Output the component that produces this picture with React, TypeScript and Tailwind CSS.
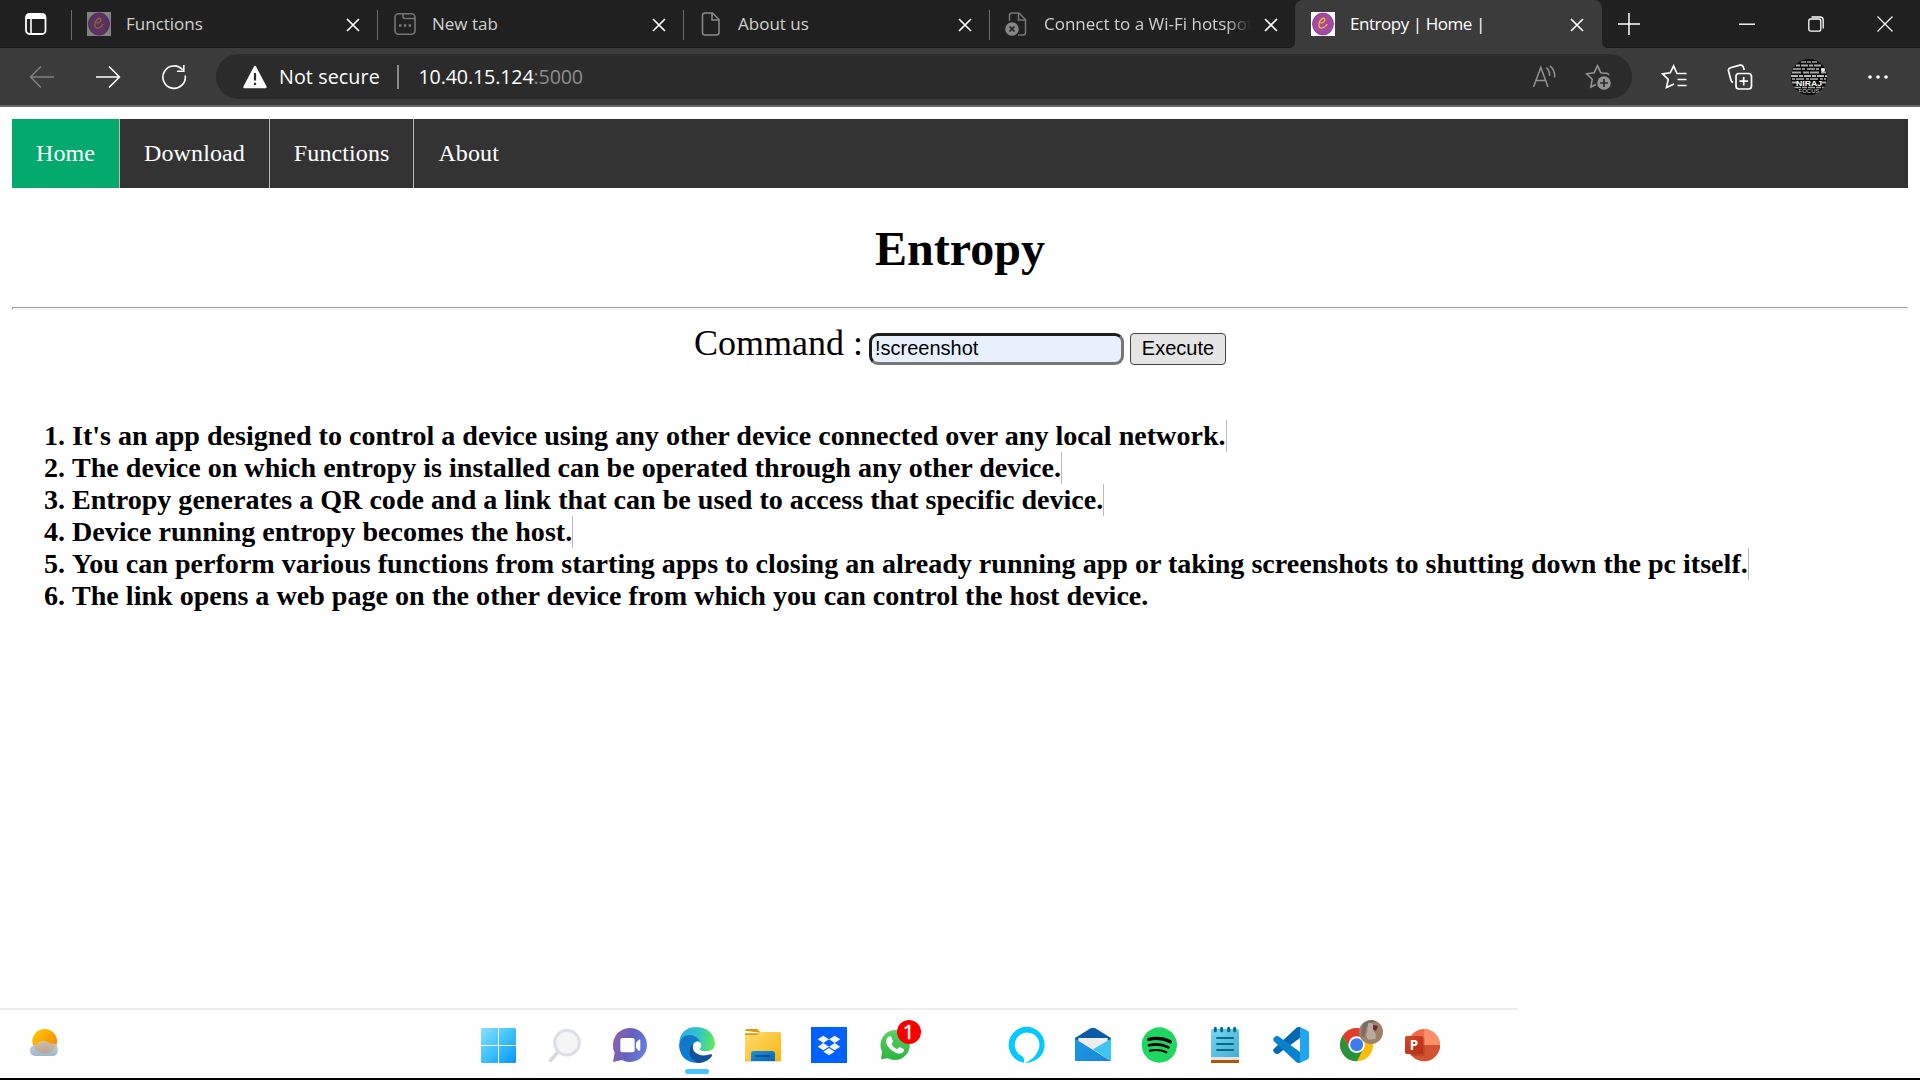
import type { ReactNode } from "react";

const UI = "font-['Open_Sans','Noto_Sans',sans-serif]";
const SERIF = "font-['Liberation_Serif',serif]";

function Cross({ className = "" }: { className?: string }) {
  return (
    <svg className={className} width="14" height="14" viewBox="0 0 14 14" fill="none" stroke="#fff" strokeWidth="1.7">
      <path d="M1 1L13 13M13 1L1 13" />
    </svg>
  );
}

function Favicon({ dim = false }: { dim?: boolean }) {
  return (
    <svg width="24" height="24" viewBox="0 0 24 24" fill="none">
      <rect width="24" height="24" fill={dim ? "#828282" : "#fff"} />
      <ellipse cx="12" cy="12" rx="10.5" ry="11" fill={dim ? "#5b3160" : "#a349a4"} stroke={dim ? "#45244a" : "#7c3b80"} strokeWidth="0.8" />
      <path d="M9.500 11C12.500 11.200 14.800 8.500 13.600 6.800C12 5.200 8.500 8 7.900 12C7.300 17.300 12.500 17.500 16.300 12" stroke={dim ? "#8a6a35" : "#f2c21b"} strokeWidth="1.3" />
    </svg>
  );
}

function NewTabIcon() {
  return (
    <svg width="24" height="24" viewBox="0 0 24 24" fill="none" stroke="#757575" strokeWidth="1.6">
      <rect x="2" y="1.800" width="20" height="20.400" rx="3.500" />
      <path d="M10 2V4.500Q10 6.500 12 6.500H22" />
      <path d="M6 13.500H8.500M10.800 13.500H13.300M15.600 13.500H18" strokeWidth="2.400" />
    </svg>
  );
}

function PageIcon() {
  return (
    <svg width="24" height="24" viewBox="0 0 24 24" fill="none" stroke="#8a8a8a" strokeWidth="1.500">
      <path d="M6 1H13.500L20 7.500V20.500Q20 23 17.500 23H6Q3.500 23 3.500 20.500V3.500Q3.500 1 6 1ZM13 1V8H20" />
    </svg>
  );
}

function BrokenPageIcon() {
  return (
    <svg width="24" height="24" viewBox="0 0 24 24" fill="none" stroke="#757575" strokeWidth="1.500">
      <path d="M4.500 9V3.500Q4.500 1 7 1H14L20.500 7.500V20.500Q20.500 23 18 23H13M13.500 1V8H20.500" />
      <circle cx="7" cy="17" r="6.800" fill="#858585" stroke="none" />
      <path d="M4.500 14.500L9.500 19.500M9.500 14.500L4.500 19.500" stroke="#202020" strokeWidth="1.700" />
    </svg>
  );
}

function Tab({ icon, title, active = false, titleClass = "" }: { icon: ReactNode; title: string; active?: boolean; titleClass?: string }) {
  return (
    <div
      className={
        "relative flex h-12 shrink-0 items-center pl-4 " +
        (active ? "w-[307px] rounded-t-[8px] bg-[#3b3b3b] text-white" : "w-[306px] text-[#d0d0d0]")
      }
    >
      {active ? (
        <>
          <span className="absolute -left-[5px] bottom-0 size-[5px] bg-[radial-gradient(circle_at_0_0,transparent_4.5px,#3b3b3b_5px)]" />
          <span className="absolute -right-[5px] bottom-0 size-[5px] bg-[radial-gradient(circle_at_100%_0,transparent_4.5px,#3b3b3b_5px)]" />
        </>
      ) : (
        <span className="absolute left-0 top-[10px] h-[30px] w-px bg-[#6a6a6a]" />
      )}
      {icon}
      <span className={"ml-[15px] w-[207px] overflow-hidden whitespace-nowrap text-[17px] leading-6 " + titleClass}>{title}</span>
      <Cross className="ml-[13px] mt-[2px]" />
    </div>
  );
}

function TabStrip() {
  return (
    <div className="flex h-12 items-center bg-[#202020] shadow-[inset_0_-1px_0_#181818]">
      <svg className="ml-6 mr-6" width="23" height="24" viewBox="0 0 23 24" fill="none">
        <rect x="2" y="2" width="19.500" height="20" rx="3.500" stroke="#fff" strokeWidth="1.800" />
        <path d="M1.500 7V5Q1.500 1.500 5 1.500H18.500Q22 1.500 22 5V7Z" fill="#fff" />
        <path d="M7 7V22" stroke="#fff" strokeWidth="1.600" />
      </svg>
      <Tab icon={<Favicon dim />} title="Functions" />
      <Tab icon={<NewTabIcon />} title="New tab" />
      <Tab icon={<PageIcon />} title="About us" />
      <Tab
        icon={<BrokenPageIcon />}
        title="Connect to a Wi-Fi hotspot"
        titleClass="[mask-image:linear-gradient(to_right,black_88%,transparent)]"
      />
      <Tab icon={<Favicon />} title="Entropy | Home |" active titleClass="tracking-[-0.45px]" />
      <svg className="ml-[16px]" width="22" height="22" viewBox="0 0 22 22" stroke="#fff" strokeWidth="1.500">
        <path d="M11 0V22M0 11H22" />
      </svg>
      <div className="ml-auto mr-[27px] flex items-center gap-[53px]">
        <svg width="16" height="16" viewBox="0 0 16 16" stroke="#fff" strokeWidth="1.400">
          <path d="M0 8.200H16" />
        </svg>
        <svg width="16" height="16" viewBox="0 0 16 16" fill="none" stroke="#fff" strokeWidth="1.300">
          <rect x="0.800" y="3" width="12" height="12.200" rx="2" />
          <path d="M3.500 1H12Q15.200 1 15.200 4V12.500" />
        </svg>
        <svg width="16" height="16" viewBox="0 0 16 16" stroke="#fff" strokeWidth="1.300">
          <path d="M0.500 0.500L15.500 15.500M15.500 0.500L0.500 15.500" />
        </svg>
      </div>
    </div>
  );
}

function ProfilePicture() {
  return (
    <svg width="36" height="36" viewBox="0 0 36 36" fill="none">
      <defs>
        <clipPath id="profile">
          <circle cx="18" cy="18" r="18" />
        </clipPath>
      </defs>
      <g clipPath="url(#profile)">
        <rect width="36" height="36" fill="#0b0b0b" />
        <g stroke="#a8a8a8" strokeWidth="1.800">
          <path d="M10 3H27" strokeDasharray="5 1 4 1" stroke="#777" />
          <path d="M5 6.500H31" strokeDasharray="4 1 7 1" />
          <path d="M2 10H34" strokeDasharray="8 1 3 2" stroke="#888" />
          <path d="M1 13.500H35" strokeDasharray="9 2 6 1" />
          <path d="M0 17H36" strokeDasharray="7 1 4 1" stroke="#bbb" />
          <path d="M1 20H35" strokeDasharray="3 1 8 2" stroke="#888" />
          <path d="M1 23.500H6M31 23.500H35" />
          <path d="M3 28.500H33" strokeDasharray="7 1 5 1" strokeWidth="1.300" />
        </g>
        <circle cx="32" cy="11" r="2" fill="#eee" />
        <text x="18" y="27" textAnchor="middle" fontSize="8" fontWeight="700" fill="#fff" textLength="26" lengthAdjust="spacingAndGlyphs" fontFamily="Liberation Sans">NIRAJ</text>
        <text x="18" y="33.500" textAnchor="middle" fontSize="6" fill="#ccc" fontFamily="Liberation Sans">FOCUS</text>
      </g>
    </svg>
  );
}

function Toolbar() {
  return (
    <div className="flex h-[59px] items-center border-b-2 border-[#686868] bg-[#3b3b3b] pl-[29px]">
      <svg width="26" height="24" viewBox="0 0 26 24" fill="none" stroke="#828282" strokeWidth="1.500">
        <path d="M25 12H1.500M12 1.500L1.500 12L12 22.500" />
      </svg>
      <svg className="ml-10" width="26" height="24" viewBox="0 0 26 24" fill="none" stroke="#fff" strokeWidth="1.500">
        <path d="M1 12H24.500M14 1.500L24.500 12L14 22.500" />
      </svg>
      <svg className="ml-10" width="26" height="26" viewBox="0 0 26 26" fill="none" stroke="#fff" strokeWidth="1.600">
        <path d="M24.200 11.500A11.200 11.200 0 1 1 21.500 5.700M22.800 1V7.200H16" />
      </svg>
      <div className="ml-[29px] flex h-[45px] w-[1416px] items-center rounded-full bg-[#2b2b2b] pl-[27px] text-[19.7px] text-white">
        <svg width="24" height="24" viewBox="0 0 24 24">
          <path d="M12 2L22.500 22H1.500Z" fill="#fff" stroke="#fff" strokeWidth="2.400" strokeLinejoin="round" />
          <path d="M12 8V15.500M12 17.800V20" stroke="#2b2b2b" strokeWidth="2.200" />
        </svg>
        <span className="ml-3 w-[118px] whitespace-nowrap tracking-[0.1px]">Not secure</span>
        <span className="mr-5 h-6 w-[1.5px] bg-[#8a8a8a]" />
        <span className="whitespace-nowrap tracking-[-0.15px]">
          10.40.15.124<span className="text-[#8c8c8c]">:5000</span>
        </span>
        <svg className="ml-auto" width="24" height="24" viewBox="0 0 24 24" fill="none" stroke="#929292" strokeWidth="1.500">
          <path d="M1.500 22L8.800 2.500L16 22M4 15.500H13.600M14.500 2.500Q18 6 17.600 11M18 .800Q23.500 6 22.500 12.500" />
        </svg>
        <svg className="ml-[29px] mr-[21px]" width="26" height="26" viewBox="0 0 26 26" fill="none" stroke="#929292" strokeWidth="1.600">
          <path d="M24 11L22.600 9.500L15.800 8.700L12.500 1.800L9.200 8.700L1.600 9.800L7.200 15.300L5.800 23L11 20.500" />
          <circle cx="19" cy="19" r="6.800" fill="#929292" stroke="none" />
          <path d="M19 15V23M15 19H23" stroke="#2b2b2b" strokeWidth="1.700" />
        </svg>
      </div>
      <svg className="ml-[29px]" width="26" height="26" viewBox="0 0 26 26" fill="none" stroke="#fff" strokeWidth="1.700">
        <path d="M25.500 9.500H16L12.600 2L9.200 8.800L1.600 9.800L7.200 15.300L5.500 23.500L13 20M16.500 15.500H25.500M16.500 21.500H25.500" />
      </svg>
      <svg className="ml-[40px]" width="26" height="26" viewBox="0 0 26 26" fill="none" stroke="#fff" strokeWidth="1.700">
        <rect x="9" y="9.500" width="15.500" height="15.500" rx="3" />
        <path d="M16.700 13V21.500M12.500 17.200H21M6 18.500Q4.500 18 4 16.300L1.500 7Q1 4.500 3.400 3.700L13 1.200Q15.500 .900 16.300 3L17.200 6" />
      </svg>
      <div className="ml-[38px]">
        <ProfilePicture />
      </div>
      <svg className="ml-[40px]" width="22" height="6" viewBox="0 0 22 6" fill="#fff">
        <circle cx="3" cy="3" r="1.800" />
        <circle cx="11" cy="3" r="1.800" />
        <circle cx="19" cy="3" r="1.800" />
      </svg>
    </div>
  );
}

const FACTS = [
  "It's an app designed to control a device using any other device connected over any local network.",
  "The device on which entropy is installed can be operated through any other device.",
  "Entropy generates a QR code and a link that can be used to access that specific device.",
  "Device running entropy becomes the host.",
  "You can perform various functions from starting apps to closing an already running app or taking screenshots to shutting down the pc itself.",
  "The link opens a web page on the other device from which you can control the host device.",
];

function Page() {
  const link = "block border-r border-[#bbb] px-6 py-[21px] leading-[27px]";
  return (
    <main className={"flex-1 px-3 pt-3 text-black " + SERIF}>
      <nav className="flex h-[69px] bg-[#333] text-[24px] tracking-[0.1px] text-white">
        <a className={link + " bg-[#04aa6d]"}>Home</a>
        <a className={link}>Download</a>
        <a className={link}>Functions</a>
        <a className="block px-6 py-[21px] leading-[27px]">About</a>
      </nav>
      <h1 className="mt-[33px] text-center text-[48px] font-bold leading-[55px]">Entropy</h1>
      <div className="mt-[31px] h-[3px] border border-[#9a9a9a] border-b-[#eee] border-r-[#eee]" />
      <form className="mt-[13px] flex h-[44px] items-baseline justify-center text-[36px] leading-[41px]">
        <span className="mr-[6px]">Command :</span>
        <span className="mr-[6px] block h-8 w-[255px] rounded-[9px] border-[3px] border-b-[#767676] border-l-[#1e1e1e] border-r-[#767676] border-t-[#1e1e1e] bg-[#e8f0fe] pl-[3px] font-['Liberation_Sans',sans-serif] text-[20px] leading-[25px]">
          !screenshot
        </span>
        <button
          type="button"
          className="h-8 w-24 rounded-[4px] border border-[#444] bg-[#e5e5e5] font-['Liberation_Sans',sans-serif] text-[20px] leading-[29px]"
        >
          Execute
        </button>
      </form>
      <ol className="mt-[53px] pl-8 text-[28.08px] font-bold leading-8">
        {FACTS.map((fact, i) => (
          <li key={fact} className="flex">
            <span className="w-[28px] shrink-0">{i + 1}.</span>
            <span className={i < 5 ? "border-r border-[#bbb] whitespace-nowrap" : "whitespace-nowrap"}>{fact}</span>
          </li>
        ))}
      </ol>
    </main>
  );
}

function AppIcon({ x, children }: { x: number; children?: ReactNode }) {
  return (
    <svg className="shrink-0" width="66" height="68" viewBox={x + " 30 198 204"} fill="none">
      {children}
    </svg>
  );
}

function Gradient({ id, from, to }: { id: string; from: string; to: string }) {
  return (
    <linearGradient id={id} x1="0" y1="0" x2="1" y2="1">
      <stop stopColor={from} />
      <stop offset="1" stopColor={to} />
    </linearGradient>
  );
}

function Taskbar() {
  return (
    <footer className="h-[72px] border-b-2 border-black">
      <div className="h-[2px] w-[1518px] bg-[#eee]" />
      <div className="flex h-[68px]">
        <svg className="ml-[11px] mr-[388px] shrink-0" width="66" height="68" viewBox="33 30 198 204">
          <defs>
            <Gradient id="sun" from="#ffd000" to="#f27a00" />
            <linearGradient id="cloud" x1="0" y1="0" x2="0" y2="1">
              <stop stopColor="#d0d9e0" stopOpacity="0.9" />
              <stop offset="1" stopColor="#94acc6" stopOpacity="0.9" />
            </linearGradient>
          </defs>
          <circle cx="134" cy="124" r="37" fill="url(#sun)" />
          <path d="M107 168Q90 168 90 151Q91 135 109 135Q116 124 131 123Q144 124 149 130Q174 127 174 149Q173 168 157 168Z" fill="url(#cloud)" />
          <path d="M103 142Q109 158 134 160Q158 158 166 138Q155 126 149 130Q132 117 109 135Z" fill="#cf9b6c" opacity="0.4" />
        </svg>

        <AppIcon x={15}>
          <defs>
            <linearGradient id="win" gradientUnits="userSpaceOnUse" x1="63" y1="84" x2="168" y2="189">
              <stop stopColor="#8be0ff" />
              <stop offset="0.5" stopColor="#3dc2fb" />
              <stop offset="1" stopColor="#0795f8" />
            </linearGradient>
          </defs>
          <path d="M67 84H114V135H63V88Q63 84 67 84ZM117 84H164Q168 84 168 88V135H117ZM63 138H114V189H67Q63 189 63 185ZM117 138H168V185Q168 189 164 189H117Z" fill="url(#win)" />
        </AppIcon>

        <AppIcon x={213}>
          <path d="M292 158L272 181" stroke="#d5d9dd" strokeWidth="11" strokeLinecap="round" />
          <circle cx="321" cy="128" r="37" fill="#f5f5f5" stroke="#dce0e4" strokeWidth="9" />
        </AppIcon>

        <AppIcon x={411}>
          <defs>
            <linearGradient id="chat" x1="0" y1="0.3" x2="1" y2="0.6">
              <stop stopColor="#8d62a9" />
              <stop offset="0.5" stopColor="#6460c0" />
              <stop offset="1" stopColor="#6680dc" />
            </linearGradient>
          </defs>
          <path d="M511 84A51 51 0 1 1 486 180L459 186L464 158A51 51 0 0 1 511 84Z" fill="url(#chat)" />
          <rect x="481" y="114" width="43" height="43" rx="6" fill="#fff" />
          <path d="M528 128L536 119Q541 118 541 123V148Q541 153 536 152L528 143Z" fill="#fff" />
        </AppIcon>

        <AppIcon x={609}>
          <defs>
            <linearGradient id="edgeTop" x1="0" y1="0.4" x2="1" y2="0.5">
              <stop stopColor="#2faee6" />
              <stop offset="0.5" stopColor="#2fc3cf" />
              <stop offset="1" stopColor="#63e85a" />
            </linearGradient>
            <linearGradient id="edgeBody" x1="0" y1="0" x2="0.4" y2="1">
              <stop stopColor="#1676bb" />
              <stop offset="1" stopColor="#0782e0" />
            </linearGradient>
          </defs>
          <path d="M657 133Q660 81 711 81Q760 84 765 131Q764 153 739 154Q725 154 719 149Q723 142 724 136Q721 124 711 123Q691 112 675 113Q661 118 657 133Z" fill="url(#edgeTop)" />
          <path d="M657 136Q661 106 688 105Q711 106 722 127Q712 119 702 129Q693 143 701 159Q718 173 755 166Q741 188 711 189Q661 187 657 136Z" fill="url(#edgeBody)" />
          <path d="M699 132Q683 148 690 168Q699 184 715 189Q742 188 756 168Q758 162 752 163Q718 173 701 152Q696 141 699 132Z" fill="#10529b" />
          <rect x="675" y="207" width="72" height="15" rx="7.500" fill="#4cc2ff" />
        </AppIcon>

        <AppIcon x={-3}>
          <defs>
            <Gradient id="folder" from="#ffdc70" to="#f8b60c" />
            <Gradient id="drawer" from="#1594df" to="#0b64b0" />
          </defs>
          <path d="M45 92Q45 87 50 87H79Q84 87 88 93L92 100H45Z M45 92V108H79L92 98Z" fill="#dc9b06" />
          <path d="M45 105H78Q83 105 88 99Q91 96 95 96H149Q153 96 153 100V183H45Z" fill="url(#folder)" />
          <path d="M63 183V161Q63 153 71 153H127Q135 153 135 161V183Z" fill="url(#drawer)" />
          <path d="M79 168H118" stroke="#084f91" strokeWidth="6" strokeLinecap="round" />
          <path d="M45 184.500H153" stroke="#ddd" strokeWidth="3" />
        </AppIcon>

        <AppIcon x={195}>
          <rect x="243" y="81" width="108" height="108" fill="#0061fe" />
          <path d="M263 118L280 107L297 118L280 129ZM297 118L314 107L331 118L314 129ZM263 140L280 129L297 140L280 151ZM297 140L314 129L331 140L314 151ZM280 155L297 144L314 155L297 166Z" fill="#f7f5f2" />
        </AppIcon>

        <AppIcon x={393}>
          <defs>
            <linearGradient id="phone" x1="0" y1="0" x2="0" y2="1">
              <stop stopColor="#5bd066" />
              <stop offset="1" stopColor="#2cb540" />
            </linearGradient>
          </defs>
          <path d="M495 90A45 45 0 1 1 474 175L453 178L456 155A45 45 0 0 1 495 90Z" fill="url(#phone)" />
          <path d="M470 116Q474 108 481 109Q484 110 485 114L489 123Q490 126 484 132Q490 144 502 148L508 142Q510 141 514 143L522 148Q524 151 519 157Q510 164 497 158Q471 145 468 125Q468 120 470 116Z" fill="#fff" />
          <circle cx="537" cy="96" r="36" fill="#f80000" />
          <text x="536" y="117" textAnchor="middle" fontSize="61" fill="#fff" stroke="#fff" strokeWidth="1.500" fontFamily="Open Sans">1</text>
        </AppIcon>

        <AppIcon x={0} />

        <AppIcon x={39}>
          <path d="M132 188A54 54 0 1 1 187 161Q172 186 134 189Q166 176 175 150A37 37 0 1 0 119 164Q132 170 132 178Z" fill="#00caff" />
        </AppIcon>

        <AppIcon x={237}>
          <defs>
            <linearGradient id="mail" x1="0" y1="0.2" x2="1" y2="1">
              <stop stopColor="#1f97e0" />
              <stop offset="1" stopColor="#1686d7" />
            </linearGradient>
          </defs>
          <path d="M285 114L332 85Q339 81 346 85L393 114V130H285Z" fill="#0a5ba8" />
          <path d="M295 114H383V135L339 160L295 135Z" fill="#eee" />
          <path d="M393 116V183L339 148Z" fill="#40c5f2" />
          <path d="M285 116L393 183H285Z" fill="url(#mail)" />
        </AppIcon>

        <AppIcon x={435}>
          <circle cx="538" cy="135" r="53" fill="#1ed760" />
          <g stroke="#000" strokeLinecap="round">
            <path d="M506 118Q541 110 571 125" strokeWidth="10" />
            <path d="M507 136Q538 128 565 142" strokeWidth="8" />
            <path d="M510 152Q538 146 559 157" strokeWidth="6.500" />
          </g>
        </AppIcon>

        <AppIcon x={633}>
          <defs>
            <Gradient id="note" from="#74d5ef" to="#46afd1" />
          </defs>
          <path d="M693 177H777V189H693Z" fill="#b4540a" />
          <path d="M693 168H777V180H693Z" fill="#e3e3e3" />
          <path d="M693 93Q693 87 699 87H771Q777 87 777 93V171H693Z" fill="url(#note)" />
          <path d="M711 114H759M711 132H759M711 150H759" stroke="#056a91" strokeWidth="6" strokeLinecap="round" />
          <path d="M706 85V92M725 85V92M746 85V92M764 85V92" stroke="#056a91" strokeWidth="9" strokeLinecap="round" />
        </AppIcon>

        <AppIcon x={111}>
          <path d="M161 147L231 82L240 81V114L175 161Q170 164 165 160L161 156Q158 151 161 147Z" fill="#0369b2" />
          <path d="M161 123L231 188L240 189V156L175 109Q170 106 165 110L161 114Q158 119 161 123Z" fill="#0783ce" />
          <path d="M240 81L263 92Q267 94 267 99V171Q267 176 263 178L240 189Z" fill="#24a5f2" />
        </AppIcon>

        <AppIcon x={309}>
          <defs>
            <clipPath id="chromeClip">
              <circle cx="410" cy="134" r="50" />
            </clipPath>
          </defs>
          <g clipPath="url(#chromeClip)">
            <rect x="360" y="84" width="100" height="100" fill="#fbbc09" />
            <path d="M360 84H460V116H410L390 146L366 104Z" fill="#e33b2e" />
            <path d="M366 104L390 146Q400 160 428 150L408 190H350V100Z" fill="#27933f" />
          </g>
          <circle cx="410" cy="134" r="25" fill="#fff" />
          <circle cx="410" cy="134" r="19.500" fill="#3e7cec" />
          <circle cx="453" cy="96" r="36" fill="#a08168" />
          <path d="M427 74Q446 54 470 65Q448 66 439 83L433 113L423 108Z" fill="#77706a" />
          <path d="M444 70Q453 65 459 73L459 91Q471 102 467 116L446 119Q435 108 442 94Z" fill="#b9ac9c" />
          <path d="M459 75L474 78L468 93L459 88Z" fill="#6f2634" />
        </AppIcon>

        <AppIcon x={507}>
          <defs>
            <Gradient id="ppt" from="#d64a29" to="#b52c14" />
          </defs>
          <circle cx="612" cy="135" r="48" fill="#ed6c47" />
          <path d="M612 87A48 48 0 0 1 660 135H612Z" fill="#ff8f6b" />
          <path d="M660 135A48 48 0 0 1 568 155L564 135Z" fill="#d35230" />
          <rect x="569" y="112" width="45" height="55" rx="5" fill="#93351c" opacity="0.4" />
          <rect x="555" y="108" width="54" height="54" rx="5" fill="url(#ppt)" />
          <text x="582" y="149" textAnchor="middle" fontSize="40" fontWeight="700" fill="#fff" fontFamily="Open Sans">P</text>
        </AppIcon>
      </div>
    </footer>
  );
}

export default function App() {
  return (
    <div className={"flex h-[1080px] w-[1920px] flex-col overflow-hidden bg-white " + UI}>
      <header>
        <TabStrip />
        <Toolbar />
      </header>
      <Page />
      <Taskbar />
    </div>
  );
}
